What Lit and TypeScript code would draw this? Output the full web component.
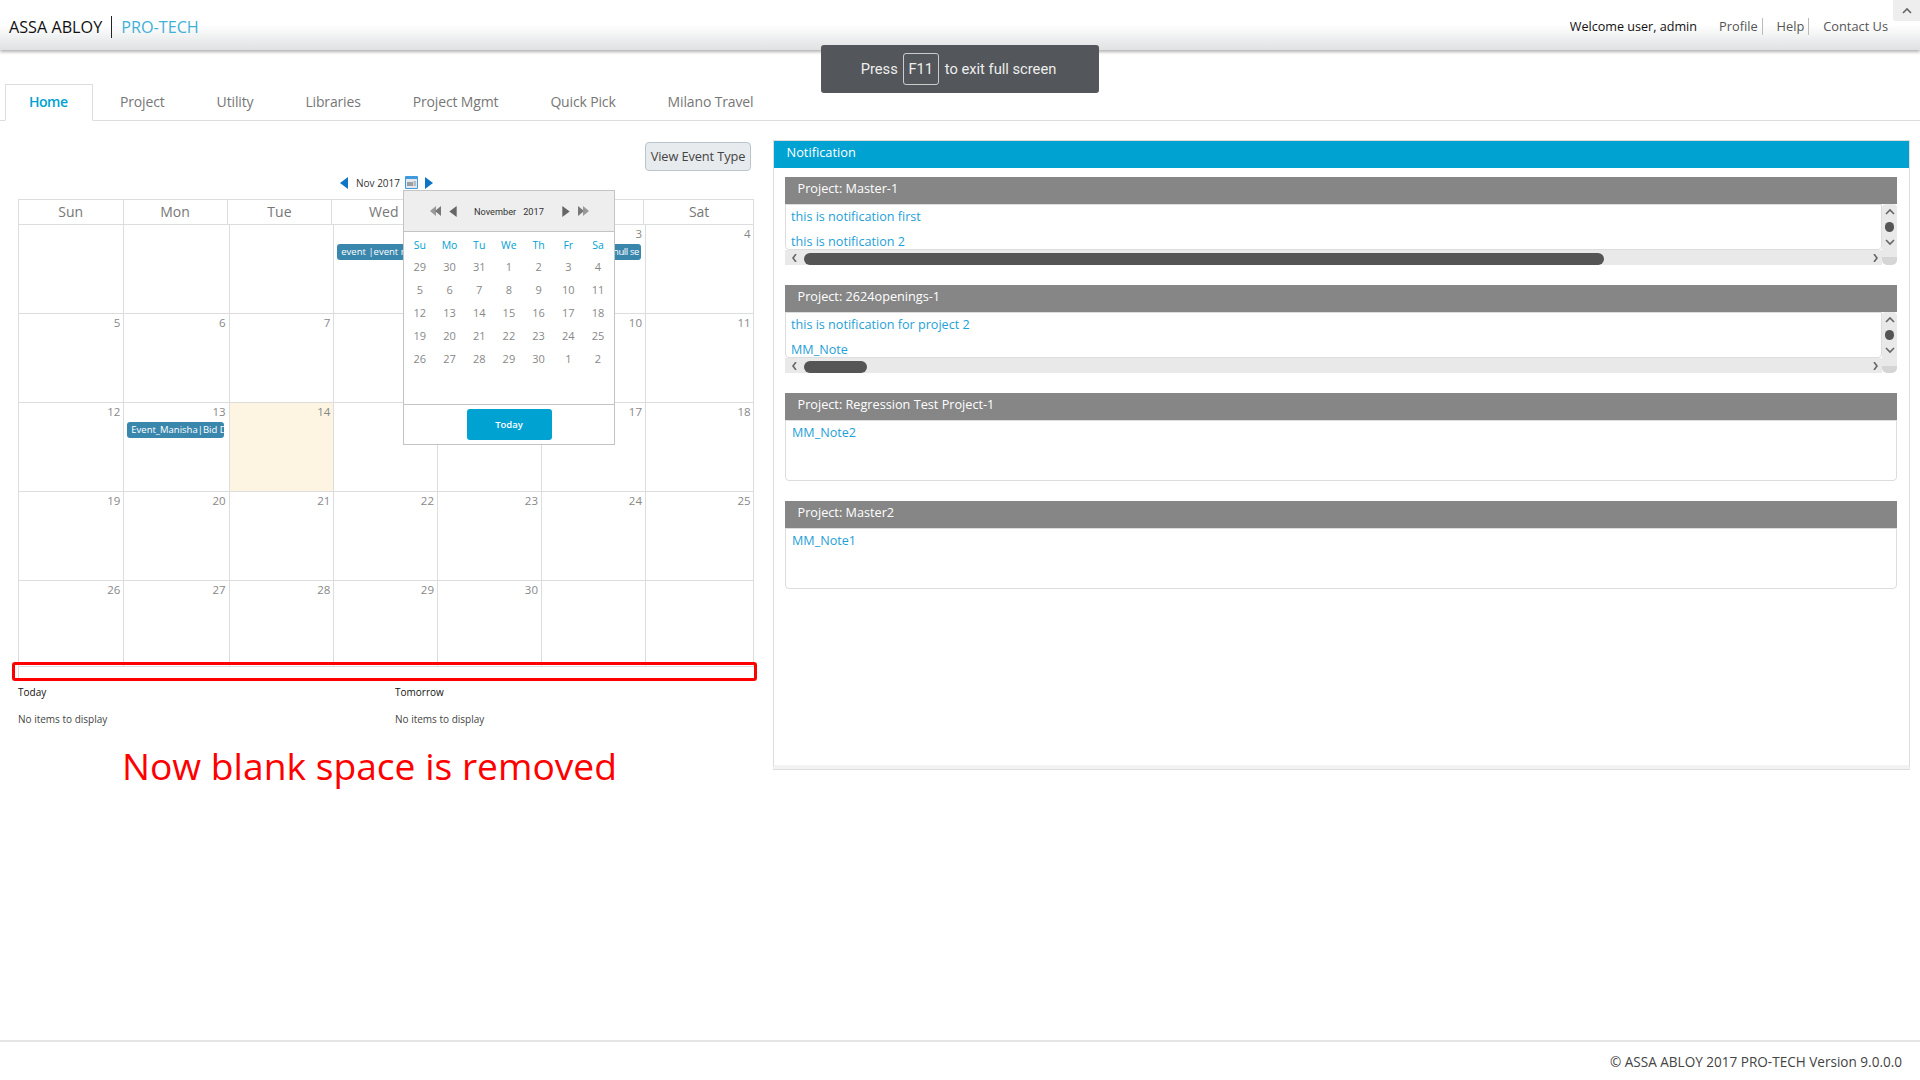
import { LitElement, html, css, svg } from "lit";
import { customElement } from "lit/decorators.js";

const tri = (dir: "l" | "r", color: string, w = 8, h = 12) => html`<svg class="ico" width=${w} height=${h} viewBox="0 0 8 12"><path d=${dir === "l" ? "M8 0V12L0 6Z" : "M0 0V12L8 6Z"} fill=${color}/></svg>`;
const dbl = (dir: "l" | "r") => html`<svg class="ico" width="12" height="12" viewBox="0 0 12 12">${dir === "l"
  ? svg`<path d="M6 1V11L0 6Z" fill="#999"/><path d="M11 1V11L5 6Z" fill="#777"/>`
  : svg`<path d="M1 1V11L7 6Z" fill="#777"/><path d="M6 1V11L12 6Z" fill="#999"/>`}</svg>`;
const chev = (d: string) => html`<svg class="ico" width="10" height="8" viewBox="0 0 10 8"><path d=${d} fill="none" stroke="#666" stroke-width="1.6"/></svg>`;

const weeks: (number | "")[][] = [
  ["", "", "", 1, 2, 3, 4],
  [5, 6, 7, 8, 9, 10, 11],
  [12, 13, 14, 15, 16, 17, 18],
  [19, 20, 21, 22, 23, 24, 25],
  [26, 27, 28, 29, 30, "", ""],
];
const popupDays = [
  [29, 30, 31, 1, 2, 3, 4],
  [5, 6, 7, 8, 9, 10, 11],
  [12, 13, 14, 15, 16, 17, 18],
  [19, 20, 21, 22, 23, 24, 25],
  [26, 27, 28, 29, 30, 1, 2],
];
const projects = [
  { name: "Project: Master-1", notes: ["this is notification first", "this is notification 2"], thumb: 800 },
  { name: "Project: 2624openings-1", notes: ["this is notification for project 2", "MM_Note"], thumb: 63 },
  { name: "Project: Regression Test Project-1", notes: ["MM_Note2"], thumb: 0 },
  { name: "Project: Master2", notes: ["MM_Note1"], thumb: 0 },
];

@customElement("app-root")
export class AppRoot extends LitElement {
  static styles = css`
    :host { display: block; font-family: "Open Sans", "Liberation Sans", sans-serif; }
    * { box-sizing: border-box; }
    .page { position: relative; height: 1080px; width: 1920px; display: flex; flex-direction: column; overflow: hidden; background: #fff; }
    .ico { display: block; flex: none; }
    .gap7 { display: block; flex: none; width: 7px; }

    .topbar { height: 50px; flex: none; display: flex; align-items: center; padding: 3px 32px 0 9px; background: linear-gradient(#fff 50%, #dfe1e2 100%); box-shadow: 0 2px 3px rgba(0,0,0,.3); position: relative; z-index: 1; }
    .brand { font-size: 16.2px; color: #111; }
    .divider { width: 1px; height: 22px; background: #222; margin: 0 9px; }
    .brand.pro { color: #3fb0d8; }
    .spacer { flex: 1; }
    .welcome { font-size: 12.6px; color: #111; margin-right: 22px; }
    .toplink { font-size: 12.8px; color: #555; line-height: 17px; padding-right: 4px; border-right: 1px solid #bbb; margin-right: 14px; }
    .toplink:last-of-type { border: 0; margin: 0; padding: 0; }
    .corner { position: absolute; right: 0; top: 0; width: 27px; height: 21px; background: #eee; display: flex; align-items: center; justify-content: center; border-bottom-left-radius: 3px; z-index: 2; }

    .fsbubble { position: absolute; left: 821px; top: 45px; width: 278px; height: 48px; padding-right: 3px; background: #53565a; border-radius: 3px; display: flex; align-items: center; justify-content: center; color: #eee; font: 14.7px Roboto, sans-serif; z-index: 5; }
    .fsbubble .key { width: 36px; height: 32px; border: 1px solid #ccc; border-radius: 3px; display: flex; align-items: center; justify-content: center; margin: 0 6px 0 5px; }

    .tabs { flex: none; margin-top: 34px; height: 37px; border-bottom: 1px solid #ddd; display: flex; padding-left: 5px; }
    .tab { height: 37px; padding: 0 26px; line-height: 35px; font-size: 14px; color: #777; letter-spacing: -0.15px; }
    .tab.on { width: 88px; padding: 0 0 0 23px; border: 1px solid #ddd; border-bottom: 1px solid #fff; color: #00a2d2; font-weight: 600; letter-spacing: -0.5px; line-height: 33px; margin-right: 1px; }

    .main { flex: 1; display: flex; padding: 20px 10px 0 18px; align-items: flex-start; gap: 19px; }
    .left { width: 736px; flex: none; position: relative; }
    .toolbar { display: flex; justify-content: flex-end; padding-right: 3px; height: 35px; padding-top: 1px; }
    .btn { height: 29px; width: 106px; padding-bottom: 2px; border: 1px solid #b9c4cc; border-radius: 4px; background: #e8ebee; color: #444; font-size: 12.8px; display: flex; align-items: center; justify-content: center; letter-spacing: -0.1px; }
    .calnav { display: flex; align-items: center; height: 13px; padding-left: 322px; font-size: 10px; color: #333; }
    .calnav .label { margin: 0 5px 0 8px; width: 44px; white-space: nowrap; }
    .calicon { margin-right: 7px; }

    .dow { display: grid; grid-template-columns: 103.6px 104px 104.7px 104px 104px 104px 110.7px; margin-top: 10px; border: 1px solid #ddd; border-bottom: 0; height: 25px; }
    .dow div { border-left: 1px solid #ddd; text-align: center; font-size: 14px; color: #777; line-height: 23px; }
    .dow div:first-child { border-left: 0; }
    .week { display: grid; grid-template-columns: 105.3px 105.3px 104.7px 103.7px 104px 104px 108.6px; border-top: 1px solid #ddd; height: 89px; border-right: 1px solid #ddd; }
    .week.last { height: 87px; border-bottom: 1px solid #ddd; }
    .cell { grid-row: 1; border-left: 1px solid #ddd; text-align: right; padding: 0 3px 0 0; font-size: 11.5px; line-height: 18px; color: #888; }
    .cell.today { background: #fdf5e2; }
    .event { grid-row: 1; align-self: start; height: 16px; margin-top: 19px; border-radius: 3px; background: #3a87ad; color: #fff; font-size: 9.5px; line-height: 15px; padding: 0 2px 0 4px; display: flex; justify-content: space-between; white-space: nowrap; overflow: hidden; }
    .event.a { grid-column: 4 / 7; margin-left: 4px; margin-right: 4px; }
    .event.b { grid-column: 2; margin-left: 4px; margin-right: 5px; padding-right: 0; }
    .tighter { letter-spacing: -0.4px; }
    .tail { height: 12px; border-left: 1px solid #ddd; }
    .redbox { position: absolute; left: -6px; top: 521px; width: 745px; height: 19px; border: 3px solid #f00; border-radius: 3px; }

    .lists { display: grid; grid-template-columns: 377px 1fr; margin-top: 3px; }
    .lists h4 { margin: 0; font-size: 10px; font-weight: 400; color: #111; line-height: 20px; }
    .lists p { margin: 7px 0 0; font-size: 10px; color: #444; line-height: 20px; }
    .remark { margin: 12px 0 0 104px; font-size: 37.2px; color: #f00; line-height: 50px; white-space: nowrap; }

    .popup { position: absolute; left: 385px; top: 49px; width: 212px; height: 255px; background: #fff; border: 1px solid #c4c4c4; display: flex; flex-direction: column; z-index: 3; }
    .pophead { height: 41px; flex: none; background: #eee; border-bottom: 1px solid #c4c4c4; display: flex; align-items: center; padding-left: 26px; font: 9.2px Roboto, sans-serif; color: #333; }
    .pophead .m { margin: 0 7px 0 17px; }
    .pophead .y { margin-right: 18px; }
    .popgrid { flex: 1; display: grid; grid-template-columns: repeat(7, 29.7px); grid-template-rows: 22px; grid-auto-rows: 23px; padding: 1px 0 0 1px; font-size: 11px; color: #888; text-align: center; line-height: 23px; }
    .popgrid .wd { color: #00a2d2; line-height: 24px; height: 21px; font-size: 10.5px; }
    .popfoot { height: 40px; flex: none; border-top: 1px solid #c4c4c4; display: flex; justify-content: center; padding-top: 4px; }
    .todaybtn { width: 85px; height: 31px; background: #00a2d2; color: #fff; border-radius: 3px; font-size: 9.5px; font-weight: 600; display: flex; align-items: center; justify-content: center; }

    .panel { flex: none; width: 1137px; height: 629px; margin-top: -1px; border: 1px solid #ddd; border-bottom: 4px solid #f3f3f3; box-shadow: 0 1px 0 #ddd; }
    .panel > h3 { margin: 0; height: 27px; background: #00a2d2; color: #fff; font-size: 12.8px; font-weight: 400; line-height: 22px; padding-left: 12.5px; }
    .sections { padding: 9px 12px 0 11px; display: flex; flex-direction: column; gap: 20px; }
    .sec h5 { margin: 0; height: 27px; background: #868686; color: #fff; font-size: 12.7px; font-weight: 400; line-height: 23px; padding-left: 12.5px; }
    .secbody { height: 61px; border: 1px solid #ddd; border-radius: 0 0 4px 4px; padding-left: 6px; }
    .note { font-size: 12.6px; color: #1f9fd8; line-height: 24.5px; white-space: nowrap; height: 24.5px; }
    .secscroll { height: 61px; display: grid; grid-template-columns: 1fr 15px; grid-template-rows: 46px 15px; }
    .viewport { border: 1px solid #ddd; border-radius: 0 0 4px 4px; padding-left: 5px; overflow: hidden; }
    .vbar { background: #e9e9e9; display: flex; flex-direction: column; align-items: center; justify-content: space-between; padding: 4px 0; border-radius: 4px 4px 0 0; }
    .vbar i { display: block; width: 9px; height: 10px; border-radius: 5px; background: #555; }
    .hbar { background: #e9e9e9; display: flex; align-items: center; position: relative; padding: 0 1px 0 5px; justify-content: space-between; }
    .hbar .thumb { position: absolute; left: 19px; top: 3px; height: 12px; border-radius: 6px; background: #555; }
    .cornerbox { background: linear-gradient(#e9e9e9 50%, #d5d5d5 50%); border-radius: 0 0 5px 5px; }

    .footer { flex: none; height: 40px; border-top: 2px solid #e5e5e5; text-align: right; padding: 10px 18px 0 0; font-size: 13.55px; line-height: 20px; color: #444; }
  `;

  render() {
    return html`<div class="page">
      <div class="topbar">
        <span class="brand">ASSA ABLOY</span><span class="divider"></span><span class="brand pro">PRO-TECH</span>
        <span class="spacer"></span>
        <span class="welcome">Welcome user, admin</span>
        <span class="toplink">Profile</span><span class="toplink">Help</span><span class="toplink">Contact Us</span>
        <div class="corner">${chev("M1 6L5 2L9 6")}</div>
      </div>
      <div class="fsbubble">Press <span class="key">F11</span> to exit full screen</div>
      <div class="tabs">
        ${["Home", "Project", "Utility", "Libraries", "Project Mgmt", "Quick Pick", "Milano Travel"].map(
          (t, i) => html`<div class="tab ${i === 0 ? "on" : ""}">${t}</div>`)}
      </div>
      <div class="main">
        <div class="left">
          <div class="toolbar"><div class="btn">View Event Type</div></div>
          <div class="calnav">
            ${tri("l", "#0d75c4")}
            <span class="label">Nov 2017</span>
            <svg class="ico calicon" width="13" height="13" viewBox="0 0 13 13"><rect width="13" height="13" rx="1" fill="#3f9ae0"/><rect x="1" y="3" width="11" height="9" fill="#e4e8ec"/><rect x="2" y="6" width="6" height="4" fill="#9aa0a6"/><rect x="8.5" y="5" width="2.5" height="5" fill="#b8bcc0"/></svg>
            ${tri("r", "#0d75c4")}
          </div>
          <div class="dow">${["Sun", "Mon", "Tue", "Wed", "Thu", "Fri", "Sat"].map((d) => html`<div>${d}</div>`)}</div>
          ${weeks.map((w, wi) => html`<div class="week ${wi === 4 ? "last" : ""}">
            ${w.map((d, i) => html`<div class="cell ${d === 14 ? "today" : ""}" style="grid-column:${i + 1}">${d}</div>`)}
            ${wi === 0 ? html`<div class="event a"><span>event |event name</span><span class="tighter">null se</span></div>` : ""}
            ${wi === 2 ? html`<div class="event b"><span>Event_Manisha|Bid Date</span></div>` : ""}
          </div>`)}
          <div class="tail"></div>
          <div class="redbox"></div>
          <div class="lists">
            <div><h4>Today</h4><p>No items to display</p></div>
            <div><h4>Tomorrow</h4><p>No items to display</p></div>
          </div>
          <div class="remark">Now blank space is removed</div>

          <div class="popup">
            <div class="pophead">
              ${dbl("l")}<span class="gap7"></span>${tri("l", "#666", 8, 11)}
              <span class="m">November</span><span class="y">2017</span>
              ${tri("r", "#666", 8, 11)}<span class="gap7"></span>${dbl("r")}
            </div>
            <div class="popgrid">
              ${["Su", "Mo", "Tu", "We", "Th", "Fr", "Sa"].map((d) => html`<div class="wd">${d}</div>`)}
              ${popupDays.flat().map((d) => html`<div>${d}</div>`)}
            </div>
            <div class="popfoot"><div class="todaybtn">Today</div></div>
          </div>
        </div>
        <div class="panel">
          <h3>Notification</h3>
          <div class="sections">
            ${projects.map((p) => html`<div class="sec">
              <h5>${p.name}</h5>
              ${p.thumb
                ? html`<div class="secscroll">
                    <div class="viewport">${p.notes.map((n) => html`<div class="note">${n}</div>`)}</div>
                    <div class="vbar">${chev("M1 6L5 2L9 6")}<i></i>${chev("M1 2L5 6L9 2")}</div>
                    <div class="hbar">${chev("M6 0L3 4L6 8")}<div class="thumb" style="width:${p.thumb}px"></div>${chev("M3 0L6 4L3 8")}</div>
                    <div class="cornerbox"></div>
                  </div>`
                : html`<div class="secbody">${p.notes.map((n) => html`<div class="note">${n}</div>`)}</div>`}
            </div>`)}
          </div>
        </div>
      </div>
      <div class="footer">© ASSA ABLOY 2017 PRO-TECH Version 9.0.0.0</div>
    </div>`;
  }
}
